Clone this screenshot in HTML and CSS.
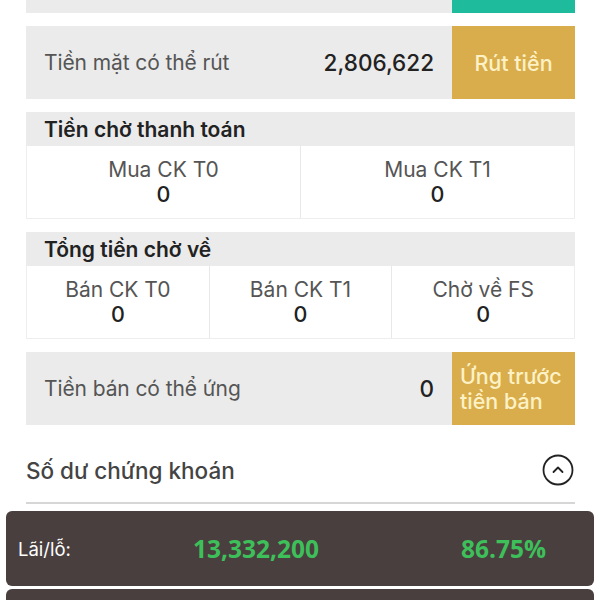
FILE: index.html
```html
<!DOCTYPE html>
<html lang="vi">
<head>
    <meta charset="UTF-8">
    <title>Tài sản</title>
    <link rel="stylesheet" href="styles.css">
</head>
<body>
    <main class="assets">
        <div class="cash-row cash-row-cut">
            <div class="cash-info"></div>
            <div class="cash-btn cash-btn-teal"></div>
        </div>

        <div class="cash-row">
            <div class="cash-info">
                <span class="cash-label">Tiền mặt có thể rút</span>
                <span class="cash-value">2,806,622</span>
            </div>
            <button class="cash-btn">Rút tiền</button>
        </div>

        <section class="pending">
            <h2 class="pending-title">Tiền chờ thanh toán</h2>
            <div class="pending-cells">
                <div class="pending-cell">
                    <span class="pending-label">Mua CK T0</span>
                    <span class="pending-value">0</span>
                </div>
                <div class="pending-cell">
                    <span class="pending-label">Mua CK T1</span>
                    <span class="pending-value">0</span>
                </div>
            </div>
        </section>

        <section class="pending">
            <h2 class="pending-title">Tổng tiền chờ về</h2>
            <div class="pending-cells">
                <div class="pending-cell">
                    <span class="pending-label">Bán CK T0</span>
                    <span class="pending-value">0</span>
                </div>
                <div class="pending-cell">
                    <span class="pending-label">Bán CK T1</span>
                    <span class="pending-value">0</span>
                </div>
                <div class="pending-cell">
                    <span class="pending-label">Chờ về FS</span>
                    <span class="pending-value">0</span>
                </div>
            </div>
        </section>

        <div class="cash-row">
            <div class="cash-info">
                <span class="cash-label">Tiền bán có thể ứng</span>
                <span class="cash-value">0</span>
            </div>
            <button class="cash-btn cash-btn-wrap">Ứng trước tiền bán</button>
        </div>

        <div class="stock-head">
            <h2 class="stock-title">Số dư chứng khoán</h2>
            <svg class="stock-toggle" width="32" height="32" viewBox="0 0 32 32">
                <circle cx="16" cy="16" r="14.5" fill="none" stroke="#222" stroke-width="1.8"/>
                <path d="M11.5 18 L16 13.5 L20.5 18" fill="none" stroke="#222" stroke-width="1.8" stroke-linecap="round" stroke-linejoin="round"/>
            </svg>
        </div>
    </main>

    <div class="pnl">
        <span class="pnl-label">Lãi/lỗ:</span>
        <span class="pnl-value">13,332,200</span>
        <span class="pnl-pct">86.75%</span>
    </div>
    <div class="pnl"></div>
</body>
</html>
```

FILE: styles.css
```css
body {
    margin: 0;
    background: #ffffff;
    font-family: Inter, "Noto Sans", sans-serif;
    color: #222;
}

.assets {
    margin: 0 25px 0 26px;
    display: flex;
    flex-direction: column;
    gap: 13px;
}

.cash-row {
    display: flex;
    height: 73px;
}

.cash-row-cut {
    height: 13px;
}

.cash-info {
    flex: 1;
    background: #ebebeb;
    display: flex;
    align-items: center;
    justify-content: space-between;
    padding: 0 18px;
}

.cash-label {
    font-size: 21px;
    color: #555;
    letter-spacing: -0.1px;
}

.cash-value {
    font-size: 22.5px;
    font-weight: 500;
    color: #222;
}

.cash-btn {
    width: 123px;
    border: none;
    background: #d9ad4b;
    color: #fdf1c6;
    font-family: inherit;
    font-size: 21.5px;
    font-weight: 500;
    padding: 0;
}

.cash-btn-teal {
    background: #1ebc9c;
}

.cash-btn-wrap {
    text-align: left;
    padding-left: 8px;
    line-height: 25px;
}

.pending {
    display: flex;
    flex-direction: column;
}

.pending-title {
    margin: 0;
    height: 34px;
    background: #ebebeb;
    font-size: 21px;
    font-weight: 600;
    color: #222;
    padding-left: 18px;
    display: flex;
    align-items: center;
}

.pending-cells {
    display: flex;
    height: 72px;
    border: 1px solid #eeeeee;
    border-top: none;
}

.pending-cell {
    flex: 1;
    display: flex;
    flex-direction: column;
    align-items: center;
    justify-content: center;
    border-left: 1px solid #e8e8e8;
}

.pending-cell:first-child {
    border-left: none;
}

.pending-label {
    font-size: 21px;
    color: #555;
    line-height: 25px;
}

.pending-value {
    font-size: 21.5px;
    font-weight: 500;
    color: #222;
    line-height: 25px;
}

.stock-head {
    display: flex;
    align-items: center;
    justify-content: space-between;
    height: 64px;
    border-bottom: 2px solid #d6d6d6;
    padding-right: 1px;
}

.stock-title {
    margin: 0;
    font-size: 22.5px;
    font-weight: 500;
    color: #444;
}

.pnl {
    margin: 7px 6px 0;
    height: 75px;
    border-radius: 6px;
    background: #4a3f3f;
    display: flex;
    align-items: center;
    padding: 0 12px;
}

.pnl + .pnl {
    margin-top: 3px;
}

.pnl-label {
    width: 175px;
    color: #fff;
    font-size: 18.5px;
}

.pnl-value,
.pnl-pct {
    font-family: "Open Sans", sans-serif;
    font-weight: 700;
    font-size: 24.5px;
    color: #3dbf5a;
}

.pnl-pct {
    margin-left: auto;
    margin-right: 36px;
}
```
